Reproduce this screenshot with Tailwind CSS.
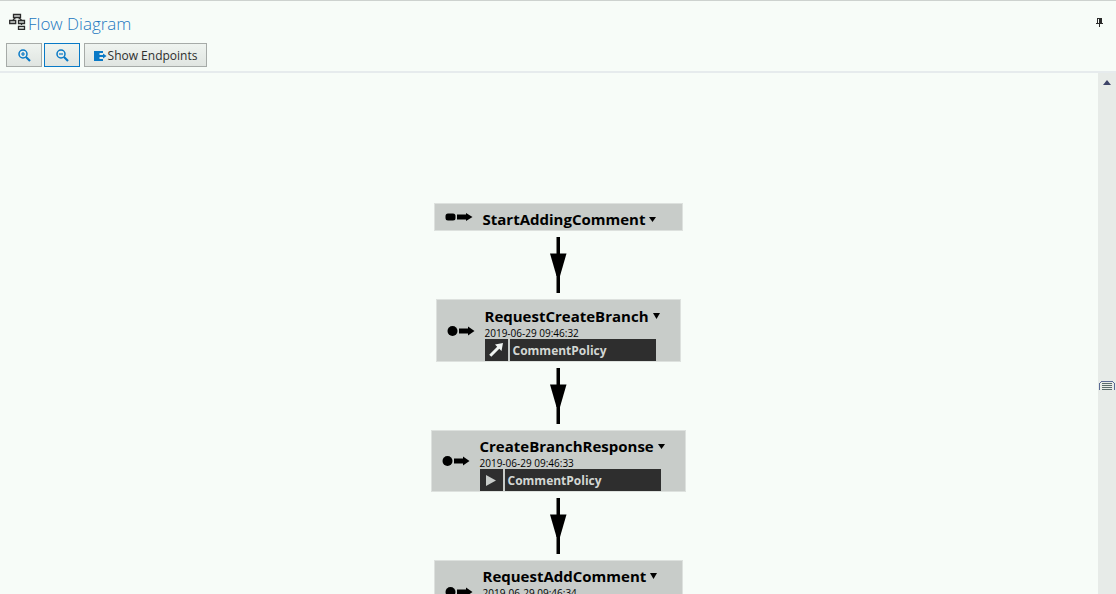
<!DOCTYPE html>
<html lang="en">
<head>
<meta charset="utf-8">
<title>Flow Diagram</title>
<script src="https://cdn.jsdelivr.net/npm/@tailwindcss/browser@4"></script>
</head>
<body class="flex h-screen flex-col overflow-hidden border-t border-[#cdd2cf] bg-[#f7fcf8] font-['Open_Sans','Noto_Sans',sans-serif] text-black">
<svg class="hidden">
  <symbol id="connector" viewBox="0 0 18 56"><path d="M7.500 0h3.500v56H7.500z"/><path d="M1 16.500h16.500L11 39H7.500z"/></symbol>
  <symbol id="message" viewBox="0 0 28 12"><circle cx="5.500" cy="6" r="5"/><path d="M12 3.500h9V1.500L27.500 6 21 10.500V8.500h-9z"/></symbol>
  <symbol id="start" viewBox="0 0 28 12"><rect x="0.500" y="2.500" width="10" height="7" rx="2.500"/><path d="M12 3.500h9V2L27.500 6 21 10V8.500h-9z"/></symbol>
</svg>

<header class="flex h-[72px] shrink-0 flex-col gap-1 border-b-2 border-[#e6ebed] px-1.5 pt-2">
  <div class="flex h-[30px] items-start justify-between pr-[7px]">
    <h1 class="flex items-start text-[17px] leading-[30px] font-light text-[#1c78c0]">
      <svg class="mt-1 mr-0.5 ml-[3px] h-[17px] w-[17px]" viewBox="0 0 17 17" fill="#d5d8d6" stroke="#2b2b2b" stroke-width="1.300" aria-hidden="true">
        <path d="M6.500 4.500L4 7M9.500 4.500L12.500 7M12.500 9v3" fill="none"/>
        <path d="M4.500 1.500h7v3h-7zM.7 7.500h6v3h-6zM9.500 7.500h6v3h-6zM9.500 13.300h6v3h-6z"/>
      </svg>
      Flow Diagram
    </h1>
    <button type="button" aria-label="Pin" class="flex pt-[9px]">
      <svg class="h-[9px] w-[7px]" viewBox="0 0 7 9" fill="#2b2b2b" shape-rendering="crispEdges"><path fill-rule="evenodd" d="M1 0h5v5h1v1H4v3H3V6H0V5h1zM2 1v4h1V1z"/></svg>
    </button>
  </div>
  <div class="flex h-6 gap-0.5 text-xs text-[#2d2f2e]">
    <button type="button" aria-label="Zoom in" class="flex w-9 items-center justify-center border border-[#a6aba8] bg-linear-to-b from-[#eff4f0] to-[#e0e5e1]">
      <svg class="size-[13px]" viewBox="0 0 13 13" fill="none" stroke="#0879c6"><circle cx="5" cy="5" r="4" stroke-width="1.500"/><path d="M8 8l4 4" stroke-width="2.200"/><path d="M3 5h4M5 3v4" stroke-width="1.200"/></svg>
    </button>
    <button type="button" aria-label="Zoom out" class="flex w-9 items-center justify-center border border-[#0879c6] bg-linear-to-b from-[#eff4f0] to-[#e0e5e1]">
      <svg class="size-[13px]" viewBox="0 0 13 13" fill="none" stroke="#0879c6"><circle cx="5" cy="5" r="4" stroke-width="1.500"/><path d="M8 8l4 4" stroke-width="2.200"/><path d="M3 5h4" stroke-width="1.200"/></svg>
    </button>
    <button type="button" class="ml-0.5 flex w-[123px] items-center justify-center gap-px border border-[#a6aba8] bg-linear-to-b from-[#eff4f0] to-[#e0e5e1] pt-0.5 whitespace-nowrap">
      <svg class="h-[10px] w-[13px] shrink-0" viewBox="0 0 13 10" fill="#0879c6" aria-hidden="true"><path d="M0 0h9v2H5.500v6H9v2H0z"/><path d="M5 4h4V2.500L12.500 5 9 7.500V6H5z"/></svg>
      Show Endpoints
    </button>
  </div>
</header>

<main class="flex min-h-0 flex-1">
  <section aria-label="Diagram" class="flex min-w-0 flex-1 flex-col items-center overflow-hidden pt-[130px] pl-[18px] *:shrink-0">
    <article class="flex h-7 w-[249px] items-center gap-2.5 border border-[#dde1de] bg-[#c8ccc9] pr-6 pl-2.5">
      <svg class="h-3 w-7 shrink-0" aria-hidden="true"><use href="#start"/></svg>
      <button type="button" class="flex flex-1 items-center gap-1 pt-1 text-[15px] leading-[22px] font-bold">StartAddingComment<svg class="h-[5px] w-[7px] shrink-0" viewBox="0 0 7 5"><path d="M0 0h7L3.500 5z"/></svg></button>
    </article>
    <svg class="my-1.5 h-14 w-[18px]" aria-hidden="true"><use href="#connector"/></svg>

    <article class="flex h-[63px] w-[245px] items-center gap-2.5 border border-[#dde1de] bg-[#c8ccc9] pr-6 pl-2.5">
      <svg class="h-3 w-7 shrink-0" aria-hidden="true"><use href="#message"/></svg>
      <div class="flex min-w-0 flex-1 flex-col self-end">
        <button type="button" class="flex items-center gap-1 text-[15px] leading-[22px] font-bold">RequestCreateBranch<svg class="h-[6px] w-[7px] shrink-0" viewBox="0 0 7 6"><path d="M0 0h7L3.500 6z"/></svg></button>
        <time class="text-[10px] leading-3">2019-06-29 09:46:32</time>
        <div class="flex h-[22px] gap-0.5 text-xs font-bold text-[#d3d7d4]">
          <span class="flex w-[23px] items-center justify-center bg-[#2e2e2e]"><svg class="size-4" viewBox="0 0 16 16" fill="#f0f4f1"><path d="M15 1l-1.500 8-2.200-2.200L3.300 14.800 1.200 12.700 9.200 4.700 7 2.500z"/></svg></span>
          <span class="flex flex-1 items-center bg-[#2e2e2e] pt-0.5 pl-[3px]">CommentPolicy</span>
        </div>
      </div>
    </article>
    <svg class="my-1.5 h-14 w-[18px]" aria-hidden="true"><use href="#connector"/></svg>

    <article class="flex h-[62px] w-[255px] items-center gap-2.5 border border-[#dde1de] bg-[#c8ccc9] pr-6 pl-2.5">
      <svg class="h-3 w-7 shrink-0" aria-hidden="true"><use href="#message"/></svg>
      <div class="flex min-w-0 flex-1 flex-col self-end">
        <button type="button" class="flex items-center gap-1 text-[15px] leading-[22px] font-bold">CreateBranchResponse<svg class="h-[5px] w-[7px] shrink-0" viewBox="0 0 7 5"><path d="M0 0h7L3.500 5z"/></svg></button>
        <time class="text-[10px] leading-3">2019-06-29 09:46:33</time>
        <div class="flex h-[22px] gap-0.5 text-xs font-bold text-[#d3d7d4]">
          <span class="flex w-[23px] items-center justify-center bg-[#2e2e2e]"><svg class="h-[11px] w-[10px]" viewBox="0 0 10 11" fill="#c8ccc9"><path d="M0 0l10 5.500L0 11z"/></svg></span>
          <span class="flex flex-1 items-center bg-[#2e2e2e] pt-0.5 pl-[3px]">CommentPolicy</span>
        </div>
      </div>
    </article>
    <svg class="my-1.5 h-14 w-[18px]" aria-hidden="true"><use href="#connector"/></svg>

    <article class="flex h-[63px] w-[249px] items-center gap-2.5 border border-[#dde1de] bg-[#c8ccc9] pr-6 pl-2.5">
      <svg class="h-3 w-7 shrink-0" aria-hidden="true"><use href="#message"/></svg>
      <div class="flex min-w-0 flex-1 flex-col self-start pt-1">
        <button type="button" class="flex items-center gap-1 text-[15px] leading-[22px] font-bold">RequestAddComment<svg class="h-[6px] w-[7px] shrink-0" viewBox="0 0 7 6"><path d="M0 0h7L3.500 6z"/></svg></button>
        <time class="text-[10px] leading-3">2019-06-29 09:46:34</time>
      </div>
    </article>
  </section>

  <aside aria-label="Scroll bar" class="flex w-[18px] shrink-0 flex-col items-center bg-[#e7ebe8] pt-[7px]">
    <button type="button" aria-label="Scroll up" class="flex"><svg class="h-[5px] w-2" viewBox="0 0 8 5" fill="#3d4468"><path d="M4 0l4 5H0z"/></svg></button>
    <div class="flex w-full flex-1 flex-col items-center">
      <div class="basis-[58%]"></div>
      <svg class="mt-px h-[10px] w-4" viewBox="0 0 16 10" fill="none" stroke="#5a6a94" shape-rendering="crispEdges"><path d="M.5 9V2.500L2.500.5h11l2 2V9" stroke-width="1"/><path d="M3 2.500h10M3 4.500h10M3 6.500h10M3 8.500h10" stroke="#596b6b"/></svg>
    </div>
  </aside>
</main>
</body>
</html>
